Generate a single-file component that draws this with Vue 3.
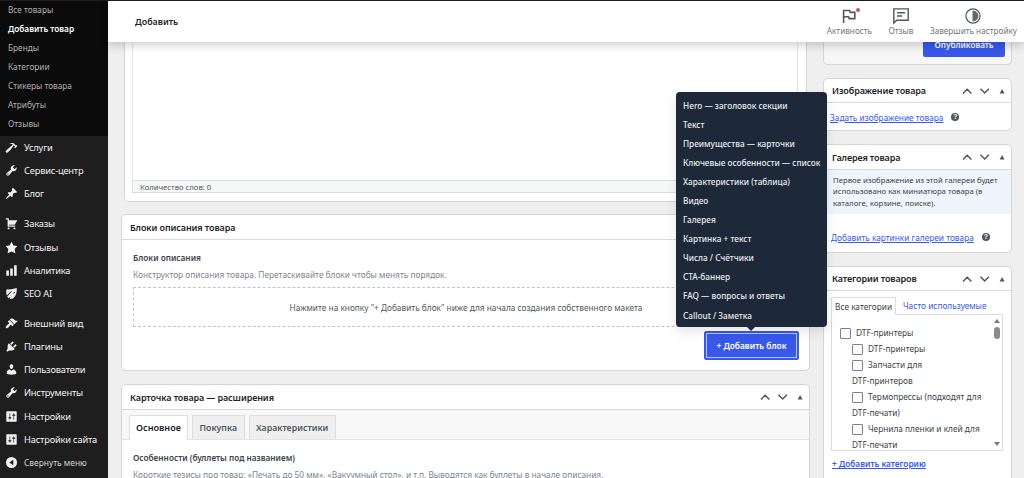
<!-- ProductEditor.vue -->
<script setup>
import { ref } from 'vue';

const subItems = ['Все товары', 'Добавить товар', 'Бренды', 'Категории', 'Стикеры товара', 'Атрибуты', 'Отзывы'];
const activeSub = ref('Добавить товар');

const wrench = 'M16.68 9.77c-1.34 1.34-3.3 1.67-4.95.99l-5.41 6.52c-.99.99-2.59.99-3.58 0s-.99-2.59 0-3.57l6.52-5.42c-.68-1.65-.35-3.61.99-4.95 1.28-1.28 3.12-1.62 4.72-1.06l-2.89 2.89 2.82 2.82 2.86-2.87c.53 1.58.18 3.39-1.08 4.65zM3.81 16.21c.4.39 1.04.39 1.43 0 .4-.4.4-1.04 0-1.43-.39-.4-1.03-.4-1.43 0-.39.39-.39 1.03 0 1.43z';
const sliders = 'M18 17V3c0-.55-.45-1-1-1H3c-.55 0-1 .45-1 1v14c0 .55.45 1 1 1h14c.55 0 1-.45 1-1zM8 11h1c.55 0 1 .45 1 1s-.45 1-1 1H8v1.5c0 .28-.22.5-.5.5s-.5-.22-.5-.5V13H6c-.55 0-1-.45-1-1s.45-1 1-1h1V5.5c0-.28.22-.5.5-.5s.5.22.5.5V11zm5-2h-1c-.55 0-1-.45-1-1s.45-1 1-1h1V5.5c0-.28.22-.5.5-.5s.5.22.5.5V7h1c.55 0 1 .45 1 1s-.45 1-1 1h-1v5.5c0 .28-.22.5-.5.5s-.5-.22-.5-.5V9z';

const menuGroups = [
  [
    { label: 'Услуги', icon: 'M17.7 6.32l1.41 1.42-3.47 3.41-1.42-1.42.84-.82c-.32-.76-.81-1.57-1.51-2.31l-4.61 6.59-5.26 4.7c-.39.39-1.02.39-1.42 0l-1.2-1.21c-.39-.39-.39-1.02 0-1.41l10.97-9.92c-1.37-.86-3.21-1.46-5.67-1.48 2.7-.82 4.95-.93 6.58-.3 1.7.66 2.82 2.2 3.91 3.58z' },
    { label: 'Сервис-центр', icon: wrench },
    { label: 'Блог', icon: 'M10.44 3.02l1.82-1.82 6.36 6.35-1.83 1.82c-1.05-.68-2.48-.57-3.41.36l-.75.75c-.92.93-1.04 2.35-.35 3.41l-1.83 1.82-2.41-2.41-2.8 2.79c-.42.42-3.38 2.71-3.8 2.29s1.86-3.39 2.28-3.81l2.79-2.79L4.1 9.36l1.83-1.82c1.05.69 2.48.57 3.4-.36l.75-.75c.93-.92 1.05-2.35.36-3.41z' },
  ],
  [
    { label: 'Заказы', icon: 'M6 13h9c.55 0 1 .45 1 1s-.45 1-1 1H5c-.55 0-1-.45-1-1V4H2c-.55 0-1-.45-1-1s.45-1 1-1h3c.55 0 1 .45 1 1v2h13l-4 7H6v1zm-.5 3c.83 0 1.5.67 1.5 1.5S6.33 19 5.5 19 4 18.33 4 17.5 4.67 16 5.5 16zm9 0c.83 0 1.5.67 1.5 1.5s-.67 1.5-1.5 1.5-1.5-.67-1.5-1.5.67-1.5 1.5-1.5z' },
    { label: 'Отзывы', icon: 'M10 1l3 6 6 .75-4.12 4.62L16 19l-6-3-6 3 1.13-6.63L1 7.75 7 7z' },
    { label: 'Аналитика', icon: 'M18 18V2h-4v16h4zm-6 0V7H8v11h4zm-6 0v-8H2v8h4z' },
    { label: 'SEO AI', icon: 'M2 4Q10 4 18 1.5Q19 12 13 17Q10 19 7 18L15.5 8L14.5 7.3L6 17.3Q4 16 3.4 14.6L10.5 7L9.6 6.2L2.8 13Q1.5 9 2 4zM12.8 9.4L13.6 10.2L8 16.6L7.3 15.8z' },
  ],
  [
    { label: 'Внешний вид', icon: 'M14.48 11.06L7.41 3.99l1.5-1.5c.5-.56 2.3-.47 3.51.32 1.21.8 1.43 1.28 2.91 2.1 1.18.64 2.45 1.26 4.45.85zm-.71.71L6.7 4.7 4.93 6.47c-.39.39-.39 1.02 0 1.41l1.06 1.06c.39.39.39 1.03 0 1.42-.6.6-1.43 1.11-2.21 1.69-.35.26-.7.53-1.01.84C1.43 14.23.4 16.08 1.4 17.07c.99 1 2.84-.03 4.18-1.36.31-.31.58-.66.85-1.02.57-.78 1.08-1.61 1.69-2.21.39-.39 1.02-.39 1.41 0l1.06 1.06c.39.39 1.02.39 1.41 0z' },
    { label: 'Плагины', icon: 'M13.11 4.36L9.87 7.6 8 5.73l3.24-3.24c.35-.34 1.05-.2 1.56.32.52.51.66 1.21.31 1.55zm-8 1.77l.91-1.12 9.01 9.01-1.19.84c-.71.71-2.63 1.16-3.82 1.16H6.14L4.9 17.26c-.59.59-1.54.59-2.12 0-.59-.58-.59-1.53 0-2.12l1.24-1.24v-3.88c0-1.13.4-3.19 1.09-3.89zm7.26 3.97l3.24-3.24c.34-.35 1.04-.21 1.55.31.52.51.66 1.21.31 1.55l-3.24 3.25z' },
    { label: 'Пользователи', icon: 'M10 9.25c-2.27 0-2.73-3.44-2.73-3.44C7 4.02 7.82 2 9.97 2c2.16 0 2.98 2.02 2.71 3.81 0 0-.41 3.44-2.68 3.44zm0 2.57L12.72 10c2.39 0 4.52 2.33 4.52 4.53v2.49s-3.65 1.13-7.24 1.13c-3.65 0-7.24-1.13-7.24-1.13v-2.49c0-2.25 1.94-4.48 4.47-4.48z' },
    { label: 'Инструменты', icon: wrench },
    { label: 'Настройки', icon: sliders },
    { label: 'Настройки сайта', icon: sliders },
    { label: 'Свернуть меню', icon: 'M10 1.5a8.5 8.5 0 1 0 0 17a8.5 8.5 0 1 0 0-17zM12.8 5.6v8.8L6.6 10z', small: true },
  ],
];

const blocks = [
  'Hero — заголовок секции',
  'Текст',
  'Преимущества — карточки',
  'Ключевые особенности — список',
  'Характеристики (таблица)',
  'Видео',
  'Галерея',
  'Картинка + текст',
  'Числа / Счётчики',
  'CTA-баннер',
  'FAQ — вопросы и ответы',
  'Callout / Заметка',
];
const showBlocks = ref(true);

const tabs = ['Основное', 'Покупка', 'Характеристики'];
const activeTab = ref('Основное');

const categories = [
  { name: 'DTF-принтеры' },
  { name: 'DTF-принтеры', child: true },
  { name: 'Запчасти для', rest: 'DTF-принтеров', child: true },
  { name: 'Термопрессы (подходят для', rest: 'DTF-печати)', child: true },
  { name: 'Чернила пленки и клей для', rest: 'DTF-печати', child: true },
];
</script>

<template>
  <div class="app">
    <aside class="sidebar">
      <ul class="submenu">
        <li v-for="item in subItems" :key="item" :class="{ active: item === activeSub }">{{ item }}</li>
      </ul>
      <ul v-for="(group, i) in menuGroups" :key="i" class="menu">
        <li v-for="item in group" :key="item.label" :class="{ small: item.small }">
          <svg viewBox="0 0 20 20"><path :d="item.icon" fill-rule="evenodd" /></svg>
          <span>{{ item.label }}</span>
        </li>
      </ul>
    </aside>

    <main class="page">
      <header class="topbar">
        <h1>Добавить</h1>
        <nav class="actions">
          <div class="action activity">
            <svg viewBox="0 0 18 18"><path d="M3.6 16V3.5h6l.7 1.9h4.5v6.2H9.2l-.7-1.9H3.6" fill="none" stroke-width="1.6" /></svg>
            <i class="dot"></i>
            <span>Активность</span>
          </div>
          <div class="action feedback">
            <svg viewBox="0 0 18 18"><path d="M1.8 16V1.9h14.4v11.3H4.6zM5 5.8h8M5 9h5.2" fill="none" stroke-width="1.4" /></svg>
            <span>Отзыв</span>
          </div>
          <div class="action setup">
            <svg viewBox="0 0 18 18"><circle cx="9" cy="9" r="7.1" fill="none" stroke-width="1.2" /><path d="M9 4a5 5 0 0 1 0 10z" fill="#646970" stroke="#646970" stroke-width="1" /></svg>
            <span>Завершить настройку</span>
          </div>
        </nav>
      </header>

      <div class="content">
        <section class="main-col">
          <div class="card editor">
            <div class="editor-body"></div>
            <div class="status">Количество слов: 0</div>
          </div>

          <div class="card builder">
            <h2 class="card-head">Блоки описания товара</h2>
            <div class="builder-body">
              <h3>Блоки описания</h3>
              <p class="hint">Конструктор описания товара. Перетаскивайте блоки чтобы менять порядок.</p>
              <div class="dropzone">Нажмите на кнопку "+ Добавить блок" ниже для начала создания собственного макета</div>
              <div class="add-row">
                <button class="add-btn" @click="showBlocks = !showBlocks">+ Добавить блок</button>
                <ul v-if="showBlocks" class="popup">
                  <li v-for="block in blocks" :key="block">{{ block }}</li>
                </ul>
              </div>
            </div>
          </div>

          <div class="card extras">
            <div class="card-head">
              <h2>Карточка товара — расширения</h2>
              <svg class="arrows" viewBox="0 0 44 10"><path d="M2 7.5l4.2-4.2L10.4 7.5M19.5 2.8l4.2 4.2 4.2-4.2" /><path class="tri" d="M38.6 7.4h5L41.1 3z" /></svg>
            </div>
            <div class="tabs">
              <button v-for="tab in tabs" :key="tab" :class="{ active: tab === activeTab }" @click="activeTab = tab">{{ tab }}</button>
            </div>
            <div class="extras-body">
              <h3>Особенности (буллеты под названием)</h3>
              <p class="hint">Короткие тезисы про товар: «Печать до 50 мм», «Вакуумный стол», и т.п. Выводятся как буллеты в начале описания.</p>
            </div>
          </div>
        </section>

        <section class="side-col">
          <div class="card publish"><button>Опубликовать</button></div>

          <div class="card image">
            <div class="card-head">
              <h2>Изображение товара</h2>
              <svg class="arrows" viewBox="0 0 44 10"><path d="M2 7.5l4.2-4.2L10.4 7.5M19.5 2.8l4.2 4.2 4.2-4.2" /><path class="tri" d="M38.6 7.4h5L41.1 3z" /></svg>
            </div>
            <div class="link-row"><a>Задать изображение товара</a><i class="help">?</i></div>
          </div>

          <div class="card gallery">
            <div class="card-head">
              <h2>Галерея товара</h2>
              <svg class="arrows" viewBox="0 0 44 10"><path d="M2 7.5l4.2-4.2L10.4 7.5M19.5 2.8l4.2 4.2 4.2-4.2" /><path class="tri" d="M38.6 7.4h5L41.1 3z" /></svg>
            </div>
            <p class="notice">Первое изображение из этой галереи будет<br />использовано как миниатюра товара (в<br />каталоге, корзине, поиске).</p>
            <div class="link-row"><a>Добавить картинки галереи товара</a><i class="help">?</i></div>
          </div>

          <div class="card cats">
            <div class="card-head">
              <h2>Категории товаров</h2>
              <svg class="arrows" viewBox="0 0 44 10"><path d="M2 7.5l4.2-4.2L10.4 7.5M19.5 2.8l4.2 4.2 4.2-4.2" /><path class="tri" d="M38.6 7.4h5L41.1 3z" /></svg>
            </div>
            <div class="cat-tabs">
              <span class="current">Все категории</span>
              <span>Часто используемые</span>
            </div>
            <div class="cat-panel">
              <ul>
                <li v-for="(cat, i) in categories" :key="i" :class="{ child: cat.child }">
                  <label><i class="box"></i>{{ cat.name }}</label>
                  <div v-if="cat.rest" class="rest">{{ cat.rest }}</div>
                </li>
              </ul>
              <div class="scrollbar">
                <i class="up"></i>
                <i class="thumb"></i>
                <i class="down"></i>
              </div>
            </div>
            <a class="add-cat">+ Добавить категорию</a>
          </div>
        </section>
      </div>
    </main>
  </div>
</template>

<style>
body {
  margin: 0;
  background: #efefef;
}
</style>

<style scoped>
* {
  box-sizing: border-box;
}
ul, h1, h2, h3, p {
  margin: 0;
  padding: 0;
  list-style: none;
  font-size: inherit;
  font-weight: inherit;
}
button {
  font-family: inherit;
  padding: 0;
  border: 0;
}
.app {
  display: flex;
  width: 1024px;
  height: 478px;
  overflow: hidden;
  border-top: 1px solid #1e1e1e;
  background: #efefef;
  font-family: "Noto Sans", "Open Sans", sans-serif;
  font-size: 8.3px;
  color: #3c434a;
  white-space: nowrap;
}

/* sidebar */
.sidebar {
  width: 108px;
  flex: none;
  background: #1e1e1e;
}
.submenu {
  height: 136px;
  padding-left: 8px;
  background: #0b0b0b;
  color: #b0b0b0;
  line-height: 19px;
  font-size: 8.25px;
}
.submenu li:first-child {
  margin-top: -1px;
}
.submenu li.active {
  color: #fff;
  font-weight: 600;
}
.menu {
  color: #f0f0f1;
  font-size: 9.3px;
  letter-spacing: -0.2px;
  margin-bottom: 7px;
}
.menu li {
  display: flex;
  align-items: center;
  gap: 6px;
  height: 23.15px;
  padding-left: 5px;
}
.menu svg {
  width: 13px;
  height: 13px;
  fill: #f0f0f1;
}
.menu .small {
  font-size: 8.4px;
  letter-spacing: 0;
  color: #d5d5d5;
}

/* top bar */
.page {
  flex: 1;
  min-width: 0;
}
.topbar {
  position: relative;
  z-index: 5;
  display: flex;
  justify-content: space-between;
  height: 41px;
  padding: 0 7px 0 27px;
  background: #fff;
  box-shadow: 0 3px 9px rgba(0, 0, 0, 0.2);
}
.topbar h1 {
  line-height: 41px;
  font-size: 8.9px;
  font-weight: 600;
  color: #1e1e1e;
}
.actions {
  display: flex;
  gap: 16.5px;
  color: #757575;
  font-size: 8.2px;
}
.action {
  position: relative;
  display: flex;
  flex-direction: column;
  align-items: center;
  padding-top: 6px;
  line-height: 12px;
}
.action svg {
  width: 18px;
  height: 18px;
  stroke: #50575e;
}
.dot {
  position: absolute;
  left: 29px;
  top: 7px;
  width: 4px;
  height: 4px;
  border-radius: 50%;
  background: #d94f4f;
}

/* cards */
.content {
  display: flex;
}
.main-col {
  width: 689px;
  margin-left: 13px;
  flex: none;
}
.side-col {
  width: 189px;
  margin-left: 13px;
}
.card {
  background: #fff;
  border: 1px solid #d5d5d5;
  border-radius: 5px;
  margin-bottom: 13px;
}
.card-head {
  display: flex;
  align-items: center;
  justify-content: space-between;
  height: 25px;
  padding: 0 6px 0 8px;
  border-bottom: 1px solid #d9d9d9;
  color: #1d2327;
  font-size: 9px;
  letter-spacing: -0.11px;
  font-weight: 600;
}
.arrows {
  width: 44px;
  height: 10px;
  fill: none;
  stroke: #50575e;
  stroke-width: 1.5;
}
.arrows .tri {
  fill: #50575e;
  stroke: none;
}
h3 {
  font-size: 8.25px;
  font-weight: 600;
  line-height: 12px;
}
.hint {
  color: #7b8591;
  line-height: 12px;
}

.editor {
  width: 683px;
  height: 160px;
  margin: 0 0 12px 3px;
  padding: 0 8px 8px 7px;
  border-top: 0;
  border-radius: 0 0 5px 5px;
}
.editor-body {
  height: 138px;
  border: 1px solid #e5e5e5;
  border-width: 0 1px;
}
.status {
  height: 13px;
  padding-left: 7px;
  border: 1px solid #dcdede;
  background: #f6f7f7;
  font-size: 7.7px;
  line-height: 12px;
  color: #50575e;
}
.builder {
  height: 157px;
}
.builder h2 {
  justify-content: flex-start;
}
.builder-body {
  padding: 12px 10px 0 11px;
}
.builder-body .hint {
  margin-top: 5px;
}
.dropzone {
  height: 40px;
  margin-top: 6px;
  border: 1px dashed #c3c4c7;
  line-height: 39px;
  text-align: center;
  color: #50575e;
}
.add-row {
  position: relative;
  display: flex;
  justify-content: flex-end;
  padding-top: 4px;
}
.add-btn {
  width: 95px;
  height: 29px;
  border: 1px solid #3858e9;
  border-radius: 2px;
  outline: 1px solid #b9c5f8;
  outline-offset: -3px;
  background: #3858e9;
  color: #fff;
  font-size: 8.4px;
  font-weight: 600;
}
.popup {
  position: absolute;
  right: -28px;
  bottom: 33px;
  width: 151px;
  height: 235px;
  padding: 4px 0 0 7px;
  border-radius: 4px;
  background: #1d2939;
  color: #e8eaed;
  font-size: 8.25px;
  line-height: 19.05px;
  font-weight: 500;
  box-shadow: 0 5px 12px rgba(0, 0, 0, 0.1);
  z-index: 3;
}
.popup::after {
  content: '';
  position: absolute;
  left: 71px;
  top: 100%;
  border: 4px solid transparent;
  border-top-color: #1d2939;
  border-bottom: 0;
}

.extras {
  height: 110px;
}
.tabs {
  display: flex;
  align-items: flex-end;
  gap: 4px;
  height: 30px;
  padding: 0 7px;
  border-bottom: 1px solid #e2e4e7;
  background: #f8f8f8;
}
.tabs button {
  height: 24px;
  padding: 0 6.5px;
  border: 1px solid #dcdee0;
  border-bottom: 0;
  background: #efefef;
  color: #50575e;
  font-size: 8.8px;
  font-weight: 600;
}
.tabs button.active {
  height: 25px;
  padding: 0 6px 1px;
  margin-bottom: -1px;
  background: #fff;
  color: #1d2327;
  font-size: 9.1px;
}
.extras-body {
  padding: 12px 11px;
}
.extras-body .hint {
  margin-top: 5px;
}

/* right column */
.publish {
  height: 23px;
  display: flex;
  justify-content: flex-end;
  padding-right: 6px;
  border-top: 0;
  border-radius: 0 0 5px 5px;
  background: #f6f6f6;
}
.publish button {
  width: 82px;
  height: 15px;
  padding-bottom: 9px;
  line-height: 6px;
  border-radius: 0 0 2px 2px;
  background: #3858e9;
  color: #fff;
  font-size: 8.2px;
  font-weight: 600;
}
.link-row {
  display: flex;
  align-items: center;
  gap: 8px;
}
a {
  color: #3858e9;
  text-decoration: underline;
}
.help {
  width: 8px;
  height: 8px;
  border-radius: 50%;
  background: #50575e;
  color: #fff;
  font: bold 7px/8px "Liberation Sans", sans-serif;
  text-align: center;
}
.image {
  height: 53px;
}
.image .card-head {
  height: 24px;
}
.image .link-row {
  height: 28px;
  padding-left: 6px;
}
.gallery {
  height: 109px;
}
.notice {
  height: 44px;
  padding: 5px 9px 0;
  background: #eff5fc;
  font-size: 7.75px;
  line-height: 11.3px;
}
.gallery .link-row {
  height: 46px;
  padding-left: 7px;
}
.cats {
  height: 230px;
}
.cats .card-head {
  height: 24px;
}
.cat-tabs {
  display: flex;
  height: 23px;
  padding: 6px 0 0 7px;
  color: #3858e9;
}
.cat-tabs span {
  line-height: 18px;
  padding-left: 7px;
}
.cat-tabs .current {
  position: relative;
  z-index: 1;
  width: 65px;
  height: 18px;
  padding-left: 3px;
  border: 1px solid #dcdcde;
  border-bottom: 0;
  background: #fff;
  color: #3c434a;
  line-height: 17px;
}
.cat-panel {
  display: flex;
  justify-content: space-between;
  width: 172px;
  height: 137px;
  margin-left: 7px;
  overflow: hidden;
  border: 1px solid #dcdcde;
}
.cat-panel ul {
  padding: 10px 0 0 8px;
  line-height: 16.05px;
}
.cat-panel label {
  display: flex;
  align-items: center;
  gap: 5px;
  height: 16.05px;
}
.child {
  padding-left: 12px;
}
.rest {
  height: 16.05px;
}
.box {
  width: 11px;
  height: 11px;
  border: 1px solid #7f8287;
  border-radius: 1px;
  background: #fff;
}
.scrollbar {
  display: flex;
  flex-direction: column;
  align-items: center;
  width: 10px;
  padding: 4px 0 4px;
}
.up, .down {
  border: 3.5px solid transparent;
}
.up {
  border-top: 0;
  border-bottom: 4px solid #7a7a7a;
}
.down {
  margin-top: auto;
  border-bottom: 0;
  border-top: 4px solid #7a7a7a;
}
.thumb {
  width: 6px;
  height: 12px;
  margin-top: 4px;
  border-radius: 3px;
  background: #8b8b8b;
}
.add-cat {
  display: block;
  padding: 7px 0 0 8px;
  line-height: 12px;
  font-weight: 600;
}
</style>
